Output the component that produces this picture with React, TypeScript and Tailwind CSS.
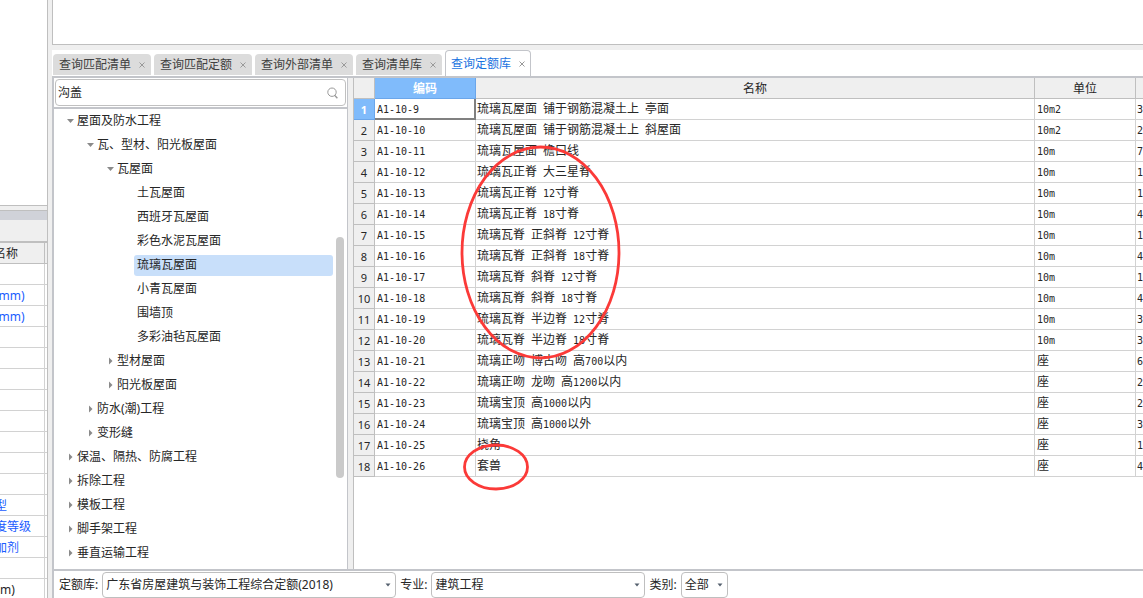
import { useState } from "react";
import clsx from "clsx";

type TreeNode = {
  label: string;
  level: number;
  state: "open" | "closed" | "leaf";
};

const tabs = ["查询匹配清单", "查询匹配定额", "查询外部清单", "查询清单库", "查询定额库"];

const treeNodes: TreeNode[] = [
  { label: "屋面及防水工程", level: 0, state: "open" },
  { label: "瓦、型材、阳光板屋面", level: 1, state: "open" },
  { label: "瓦屋面", level: 2, state: "open" },
  { label: "土瓦屋面", level: 3, state: "leaf" },
  { label: "西班牙瓦屋面", level: 3, state: "leaf" },
  { label: "彩色水泥瓦屋面", level: 3, state: "leaf" },
  { label: "琉璃瓦屋面", level: 3, state: "leaf" },
  { label: "小青瓦屋面", level: 3, state: "leaf" },
  { label: "围墙顶", level: 3, state: "leaf" },
  { label: "多彩油毡瓦屋面", level: 3, state: "leaf" },
  { label: "型材屋面", level: 2, state: "closed" },
  { label: "阳光板屋面", level: 2, state: "closed" },
  { label: "防水(潮)工程", level: 1, state: "closed" },
  { label: "变形缝", level: 1, state: "closed" },
  { label: "保温、隔热、防腐工程", level: 0, state: "closed" },
  { label: "拆除工程", level: 0, state: "closed" },
  { label: "模板工程", level: 0, state: "closed" },
  { label: "脚手架工程", level: 0, state: "closed" },
  { label: "垂直运输工程", level: 0, state: "closed" },
];

const levelPadding = ["pl-[13px]", "pl-[33px]", "pl-[53px]", "pl-[73px]"];

// 编码, 名称, 单位, 单价
const quotas: [string, string, string, string][] = [
  ["A1-10-9", "琉璃瓦屋面 铺于钢筋混凝土上 亭面", "10m2", "3"],
  ["A1-10-10", "琉璃瓦屋面 铺于钢筋混凝土上 斜屋面", "10m2", "2"],
  ["A1-10-11", "琉璃瓦屋面 檐口线", "10m", "7"],
  ["A1-10-12", "琉璃瓦正脊 大三星脊", "10m", "1"],
  ["A1-10-13", "琉璃瓦正脊 12寸脊", "10m", "1"],
  ["A1-10-14", "琉璃瓦正脊 18寸脊", "10m", "4"],
  ["A1-10-15", "琉璃瓦脊 正斜脊 12寸脊", "10m", "1"],
  ["A1-10-16", "琉璃瓦脊 正斜脊 18寸脊", "10m", "4"],
  ["A1-10-17", "琉璃瓦脊 斜脊 12寸脊", "10m", "1"],
  ["A1-10-18", "琉璃瓦脊 斜脊 18寸脊", "10m", "4"],
  ["A1-10-19", "琉璃瓦脊 半边脊 12寸脊", "10m", "3"],
  ["A1-10-20", "琉璃瓦脊 半边脊 18寸脊", "10m", "3"],
  ["A1-10-21", "琉璃正吻 博古吻 高700以内", "座", "6"],
  ["A1-10-22", "琉璃正吻 龙吻 高1200以内", "座", "2"],
  ["A1-10-23", "琉璃宝顶 高1000以内", "座", "2"],
  ["A1-10-24", "琉璃宝顶 高1000以外", "座", "3"],
  ["A1-10-25", "挠角", "座", "1"],
  ["A1-10-26", "套兽", "座", "4"],
];

const properties = ["", "(mm)", "(mm)", "", "", "", "", "", "", "", "", "型", "度等级", "加剂", ""];

export default function App() {
  const [activeTab, setActiveTab] = useState(4);
  const [keyword, setKeyword] = useState("沟盖");
  const [selectedNode, setSelectedNode] = useState("琉璃瓦屋面");

  return (
    <div className="flex h-screen overflow-hidden bg-[#efefef] font-['Noto_Sans','Noto_Sans_CJK_SC',sans-serif] text-xs text-[#262626]">
      <PropertyPanel />

      <main className="ml-1 flex min-w-0 flex-1 flex-col">
        <div className="h-[45px] shrink-0 border-b border-l border-[#bfbfbf] bg-white" />

        {/* 页签 */}
        <div
          role="tablist"
          className="mt-[5px] flex h-7 shrink-0 items-end gap-[3px] border-b-2 border-[#c3c5ca] bg-white pl-px"
        >
          {tabs.map((tab, index) => (
            <button
              key={tab}
              role="tab"
              aria-selected={index === activeTab}
              onClick={() => setActiveTab(index)}
              className={clsx(
                "flex items-center gap-2 rounded-t leading-4",
                index === activeTab
                  ? "h-[26px] border border-b-0 border-[#c3c5ca] bg-white px-[5px] text-[#1a73e0]"
                  : "mb-px h-[21px] bg-[#dcdcdc] px-[6px] text-[#404040]"
              )}
            >
              {tab}
              <svg width="6" height="6" viewBox="0 0 6 6" stroke="#999" aria-hidden="true">
                <path d="M0.5 0.5 5.5 5.5M5.5 0.5 0.5 5.5" />
              </svg>
            </button>
          ))}
        </div>

        <div className="flex min-h-0 flex-1">
          {/* 定额目录 */}
          <section className="flex w-[296px] shrink-0 flex-col border-r border-l-2 border-[#c3c5ca] bg-white">
            <div className="border-b-2 border-[#c3c5ca] p-px">
              <div className="flex h-[27px] items-center rounded border border-[#c0c0c0] pr-[7px]">
                <input
                  aria-label="搜索"
                  value={keyword}
                  onChange={(e) => setKeyword(e.target.value)}
                  className="min-w-0 flex-1 pl-[2px] leading-4 outline-none"
                />
                <svg width="11" height="12" viewBox="0 0 11 12" fill="none" stroke="#999" aria-hidden="true">
                  <circle cx="5" cy="5.2" r="4.2" />
                  <path d="m7.8 8.4 2.6 2.8" strokeWidth="1.4" />
                </svg>
              </div>
            </div>
            <div className="relative min-h-0 flex-1 overflow-hidden">
              <ul>
                {treeNodes.map((node) => (
                  <TreeItem
                    key={node.label}
                    node={node}
                    selected={node.label === selectedNode}
                    onSelect={() => setSelectedNode(node.label)}
                  />
                ))}
              </ul>
              <div className="absolute top-32 right-[3px] h-[241px] w-2 rounded-full bg-[#cacaca]" />
            </div>
          </section>

          {/* 定额列表 */}
          <section className="relative ml-[5px] min-w-0 flex-1 overflow-hidden border-l border-[#bfbfbf] bg-white">
            <QuotaTable />
            <svg
              className="pointer-events-none absolute top-0 left-0"
              width="300"
              height="430"
              fill="none"
              stroke="#fb3a38"
              strokeWidth="2.8"
              aria-hidden="true"
            >
              <ellipse cx="186.5" cy="174.5" rx="78.5" ry="105.5" />
              <ellipse cx="142" cy="389" rx="31.5" ry="22" />
            </svg>
          </section>
        </div>

        {/* 筛选条件 */}
        <footer className="flex h-[29px] shrink-0 items-center gap-1 border-t-2 border-l-2 border-[#c3c5ca] bg-white pt-px pl-[5px]">
          <FilterSelect id="library" label="定额库:" value="广东省房屋建筑与装饰工程综合定额(2018)" width="w-[294px]" />
          <FilterSelect id="major" label="专业:" value="建筑工程" width="w-[214px]" />
          <FilterSelect id="category" label="类别:" value="全部" width="w-[47px]" />
        </footer>
      </main>
    </div>
  );
}

function PropertyPanel() {
  return (
    <aside className="flex w-12 shrink-0 flex-col overflow-hidden border-r border-[#bfbfbf]">
      <div className="h-[206px] shrink-0 border-b border-[#bfbfbf] bg-white" />
      <div className="mt-1 h-[10px] shrink-0 border-t border-[#bfbfbf] bg-[#d0d2d9]" />
      <div className="h-[23px] shrink-0 border-b-2 border-[#bfbfbf]" />
      <table className="w-full table-fixed border-separate border-spacing-0 whitespace-nowrap">
        <colgroup>
          <col className="w-[45px]" />
          <col />
        </colgroup>
        <thead>
          <tr>
            <th className="h-[21px] border-r border-b border-[#bfbfbf] p-0 pt-[2px] text-left -indent-[6px] leading-4 font-normal">
              名称
            </th>
            <th className="border-b border-[#bfbfbf] p-0" />
          </tr>
        </thead>
        <tbody className="bg-white">
          {properties.map((name, index) => (
            <tr key={index}>
              <td className="h-[21px] border-r border-b border-[#d2d2d2] p-0 pt-[2px] -indent-[5px] leading-4 text-[#1a5cff]">
                {name}
              </td>
              <td className="border-b border-[#d2d2d2] p-0" />
            </tr>
          ))}
          <tr>
            <td className="h-[21px] border-r border-b border-[#d2d2d2] p-0 pt-[2px] leading-4">m)</td>
            <td className="border-b border-[#d2d2d2] p-0" />
          </tr>
        </tbody>
      </table>
    </aside>
  );
}

function TreeItem({
  node,
  selected,
  onSelect,
}: {
  node: TreeNode;
  selected: boolean;
  onSelect: () => void;
}) {
  return (
    <li className={clsx("flex h-6 items-center pr-[14px]", levelPadding[node.level])}>
      <svg width="7" height="8" viewBox="0 0 7 8" fill="#8a8a8a" className="shrink-0" aria-hidden="true">
        {node.state === "open" && <path d="M0 2h7L3.5 6z" />}
        {node.state === "closed" && <path d="M2 0.5v7l3.5-3.5z" />}
      </svg>
      <button
        onClick={onSelect}
        className={clsx(
          "h-[21px] flex-1 rounded-[3px] pl-[3px] text-left leading-4",
          selected && "bg-[#c8dffa]"
        )}
      >
        {node.label}
      </button>
    </li>
  );
}

function QuotaTable() {
  return (
    <table className="w-full table-fixed border-separate border-spacing-0 overflow-hidden whitespace-nowrap">
      <colgroup>
        <col className="w-[21px]" />
        <col className="w-[101px]" />
        <col />
        <col className="w-[101px]" />
        <col className="w-[7px]" />
      </colgroup>
      <thead>
        <tr className="bg-[#efefef] leading-4">
          <th className="h-[21px] border-r border-b border-[#bfbfbf] p-0" />
          <th className="border-r border-b border-[#6ba6ea] bg-[#80bbfb] p-0 pt-[2px] text-white">编码</th>
          <th className="border-r border-b border-[#bfbfbf] p-0 pt-[2px] font-normal">名称</th>
          <th className="border-r border-b border-[#bfbfbf] p-0 pt-[2px] font-normal">单位</th>
          <th className="border-b border-[#bfbfbf] p-0" />
        </tr>
      </thead>
      <tbody>
        {quotas.map(([code, name, unit, price], index) => (
          <tr key={code}>
            <th
              scope="row"
              className={clsx(
                "h-[21px] border-r border-b p-0 pt-[2px] text-center text-[11px] leading-4",
                index === 0
                  ? "border-[#6ba6ea] bg-[#80bbfb] text-white"
                  : "border-[#bfbfbf] bg-[#efefef] font-normal"
              )}
            >
              {index + 1}
            </th>
            <td
              className={clsx(
                "p-0 pl-[2px] leading-4",
                index === 0 ? "border-r-2 border-b-2 border-[#808080]" : "border-r border-b border-[#d2d2d2]"
              )}
            >
              <GridText>{code}</GridText>
            </td>
            <td className="border-r border-b border-[#d2d2d2] p-0 pl-px leading-4">
              <GridText>{name}</GridText>
            </td>
            <td className="border-r border-b border-[#d2d2d2] p-0 pl-[2px] leading-4">
              <GridText>{unit}</GridText>
            </td>
            <td className="border-b border-[#d2d2d2] p-0 pl-px leading-4">
              <GridText>{price}</GridText>
            </td>
          </tr>
        ))}
      </tbody>
    </table>
  );
}

// 西文半角、中文全角
function GridText({ children }: { children: string }) {
  return (
    <>
      {children.split(/([ -~]+)/).map((part, index) =>
        index % 2 === 1 ? (
          <span key={index} className="font-['DejaVu_Sans_Mono',monospace] text-[10px] leading-none whitespace-pre">
            {part}
          </span>
        ) : (
          part
        )
      )}
    </>
  );
}

function FilterSelect({
  id,
  label,
  value,
  width,
}: {
  id: string;
  label: string;
  value: string;
  width: string;
}) {
  return (
    <>
      <label htmlFor={id} className="leading-4">
        {label}
      </label>
      <div className={clsx("relative shrink-0", width)}>
        <select
          id={id}
          className="h-[26px] w-full appearance-none rounded border border-[#bfbfbf] bg-white pl-[3px] leading-4"
        >
          <option>{value}</option>
        </select>
        <svg
          className="pointer-events-none absolute top-[11px] right-[5px]"
          width="6"
          height="4"
          viewBox="0 0 6 4"
          fill="#55606e"
          aria-hidden="true"
        >
          <path d="M0.5 0.5h5L3 3.5z" />
        </svg>
      </div>
    </>
  );
}
